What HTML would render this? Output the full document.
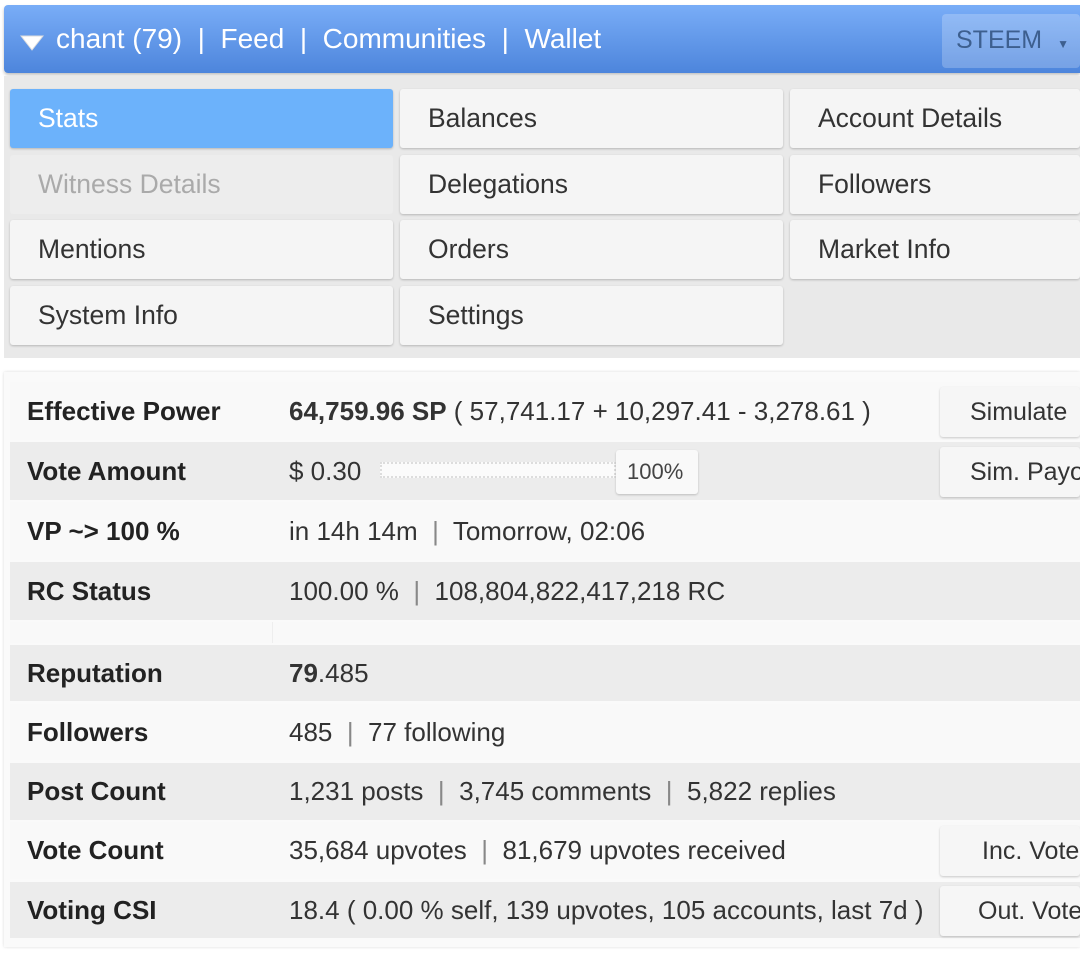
<!DOCTYPE html>
<html><head><style>
*{box-sizing:border-box;margin:0;padding:0}
body{width:1080px;height:958px;overflow:hidden;background:#fff;font-family:"Liberation Sans",sans-serif;position:relative;}
.abs{position:absolute}
.top{left:4px;top:5px;width:1076px;height:68px;background:linear-gradient(#79adf7,#4d85dc);border-radius:4px 0 0 4px;box-shadow:0 2px 3px rgba(0,0,0,.25)}
.top .t{position:absolute;left:52px;top:18px;color:#fff;font-size:28px;white-space:pre}
.steem{left:942px;top:14px;width:138px;height:54px;background:rgba(255,255,255,.22);border-radius:4px;color:#3d5f8f;font-size:25px;padding:12px 0 0 14px}
.menu{left:4px;top:76px;width:1076px;height:282px;background:#e9e9e9}
.b{position:absolute;height:59px;background:#f5f5f5;border-radius:3px;box-shadow:0 1px 2px rgba(0,0,0,.22);font-size:26.5px;color:#333;padding:14px 0 0 28px}
.tab{left:4px;top:372px;width:1076px;height:575px;background:#fafafa;box-shadow:0 0 3px rgba(0,0,0,.15)}
.r{position:absolute;left:10px;width:1070px;font-size:26px;color:#333}
.r .l{position:absolute;left:0;top:0;bottom:0;width:261px;font-weight:bold;color:#222;padding-left:17px;font-size:26px}
.r .v{position:absolute;left:262px;top:0;bottom:0;right:0;padding-left:17px;white-space:pre}
.g{background:#ececec}.w{background:#f9f9f9}
.sep{color:#888}
.btn{position:absolute;left:940px;width:140px;height:50px;background:#f6f6f6;border-radius:3px;box-shadow:0 1px 2px rgba(0,0,0,.2);font-size:25px;color:#333;padding:11px 0 0 30px;white-space:nowrap;overflow:hidden}
</style></head><body>
<div class="abs top"><svg class="abs" style="left:16px;top:30px" width="24" height="16"><path d="M1 1 L23 1 L12 15 Z" fill="#fff" stroke="#ddd"/></svg><div class="t">chant (79)  |  Feed  |  Communities  |  Wallet</div></div>
<div class="abs steem">STEEM <span style="font-size:12px;margin-left:8px">▼</span></div>
<div class="abs menu"></div>
<div class="b" style="left:10px;top:89px;width:383px;background:#6cb2fb;color:#fff">Stats</div>
<div class="b" style="left:400px;top:89px;width:383px">Balances</div>
<div class="b" style="left:790px;top:89px;width:290px">Account Details</div>
<div class="b" style="left:10px;top:155px;width:383px;background:#ededed;color:#aaa;box-shadow:none">Witness Details</div>
<div class="b" style="left:400px;top:155px;width:383px">Delegations</div>
<div class="b" style="left:790px;top:155px;width:290px">Followers</div>
<div class="b" style="left:10px;top:220px;width:383px">Mentions</div>
<div class="b" style="left:400px;top:220px;width:383px">Orders</div>
<div class="b" style="left:790px;top:220px;width:290px">Market Info</div>
<div class="b" style="left:10px;top:286px;width:383px">System Info</div>
<div class="b" style="left:400px;top:286px;width:383px">Settings</div>
<div class="abs tab"></div>
<div class="r w" style="top:382px;height:58px"><div class="l" style="padding-top:14px">Effective Power</div><div class="v" style="padding-top:14px"><b>64,759.96 SP</b> ( 57,741.17 + 10,297.41 - 3,278.61 )</div></div>
<div class="r g" style="top:442px;height:58px"><div class="l" style="padding-top:14px">Vote Amount</div><div class="v" style="padding-top:14px">$ 0.30</div></div>
<div class="abs" style="left:380px;top:462px;width:236px;height:16px;border:2px dotted #ddd;background:#fbfbfb"></div>
<div class="abs" style="left:616px;top:450px;width:82px;height:44px;background:#f9f9f9;border-radius:3px;box-shadow:0 1px 2px rgba(0,0,0,.2);font-size:22px;color:#444;padding:9px 0 0 11px">100%</div>
<div class="r w" style="top:502px;height:58px"><div class="l" style="padding-top:14px">VP ~&gt; 100 %</div><div class="v" style="padding-top:14px">in 14h 14m  <span class="sep">|</span>  Tomorrow, 02:06</div></div>
<div class="r g" style="top:562px;height:58px"><div class="l" style="padding-top:14px">RC Status</div><div class="v" style="padding-top:14px">100.00 %  <span class="sep">|</span>  108,804,822,417,218 RC</div></div>
<div class="r w" style="top:622px;height:21px"><div class="l"></div><div class="v" style="border-left:1px solid #eee"></div></div>
<div class="r g" style="top:645px;height:56px"><div class="l" style="padding-top:13px">Reputation</div><div class="v" style="padding-top:13px"><b>79</b>.485</div></div>
<div class="r w" style="top:704px;height:56px"><div class="l" style="padding-top:13px">Followers</div><div class="v" style="padding-top:13px">485  <span class="sep">|</span>  77 following</div></div>
<div class="r g" style="top:763px;height:57px"><div class="l" style="padding-top:13px">Post Count</div><div class="v" style="padding-top:13px">1,231 posts  <span class="sep">|</span>  3,745 comments  <span class="sep">|</span>  5,822 replies</div></div>
<div class="r w" style="top:822px;height:57px"><div class="l" style="padding-top:13px">Vote Count</div><div class="v" style="padding-top:13px">35,684 upvotes  <span class="sep">|</span>  81,679 upvotes received</div></div>
<div class="r g" style="top:882px;height:56px"><div class="l" style="padding-top:13px">Voting CSI</div><div class="v" style="padding-top:13px">18.4 ( 0.00 % self, 139 upvotes, 105 accounts, last 7d )</div></div>
<div class="btn" style="top:387px">Simulate</div>
<div class="btn" style="top:447px">Sim. Payout</div>
<div class="btn" style="top:826px;padding-left:42px">Inc. Votes</div>
<div class="btn" style="top:886px;padding-left:38px">Out. Votes</div>
</body></html>
